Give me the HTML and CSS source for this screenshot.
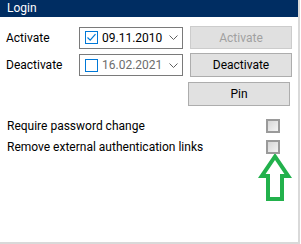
FILE: index.html
```html
<!DOCTYPE html>
<html>
<head>
<meta charset="utf-8">
<link rel="stylesheet" href="styles.css">
</head>
<body>
<div class="panel">
  <div class="header">Login</div>
  <div class="form">
    <div class="row">
      <span class="label">Activate</span>
      <div class="datebox">
        <span class="cb cb-checked"><svg width="11" height="11" viewBox="0 0 11 11"><path d="M1.5 5.5 L4.2 8.2 L9.5 2.2" fill="none" stroke="#0078d7" stroke-width="1.2"/></svg></span>
        <span class="date">09.11.2010</span>
        <svg class="chev" width="9" height="5" viewBox="0 0 9 5"><path d="M0.5 0.5 L4.5 4.5 L8.5 0.5" fill="none" stroke="#606060" stroke-width="1"/></svg>
      </div>
      <button class="btn btn-disabled">Activate</button>
    </div>
    <div class="row row2">
      <span class="label">Deactivate</span>
      <div class="datebox">
        <span class="cb"></span>
        <span class="date date-disabled">16.02.2021</span>
        <svg class="chev" width="9" height="5" viewBox="0 0 9 5"><path d="M0.5 0.5 L4.5 4.5 L8.5 0.5" fill="none" stroke="#606060" stroke-width="1"/></svg>
      </div>
      <button class="btn">Deactivate</button>
    </div>
    <div class="row row3">
      <button class="btn btn-pin">Pin</button>
    </div>
    <div class="opts">
      <div class="opt"><span class="opt-label">Require password change</span><span class="box"></span></div>
      <div class="opt"><span class="opt-label">Remove external authentication links</span><span class="box"></span></div>
    </div>
  </div>
  <svg class="arrow" width="38" height="58" viewBox="0 0 38 58"><path fill-rule="evenodd" fill="#22b14c" d="M19 7 L36 32 L28 32 L28 55 L10 55 L10 32 L2 32 Z M19 14.1 L9.6 28 L14 28 L14 51 L24 51 L24 28 L28.4 28 Z"/></svg>
</div>
</body>
</html>
```
FILE: styles.css
```css
* { box-sizing: border-box; }
html, body { margin: 0; padding: 0; background: #fff; }
body { font-family: Roboto, "Noto Sans", sans-serif; font-size: 12px; color: #000; }
.panel {
  position: relative;
  width: 300px;
  height: 244px;
  border-right: 2px solid #d9d9d9;
  border-bottom: 2px solid #d9d9d9;
}
.header {
  height: 17px;
  background: #002d62;
  color: #fff;
  padding-left: 7px;
  line-height: 17px;
  font-size: 12px;
}
.form { padding-top: 9px; }
.row { display: flex; align-items: center; height: 23px; }
.row2 { margin-top: 4px; height: 24px; }
.row3 { margin-top: 5px; height: 24px; justify-content: flex-end; padding-right: 8px; }
.label { width: 79px; padding-left: 6px; }
.datebox {
  width: 104px;
  height: 22px;
  border: 1px solid #7a7a7a;
  display: flex;
  align-items: center;
  padding-left: 5px;
}
.cb {
  width: 13px; height: 13px;
  border: 1px solid #0078d7;
  display: flex; align-items: center; justify-content: center;
}
.date { margin-left: 4px; color: #000; }
.date-disabled { color: #6d6d6d; }
.chev { margin-left: auto; margin-right: 4px; }
.btn {
  font-family: inherit; font-size: 12px;
  margin-left: 7px;
  width: 102px; height: 100%;
  background: #e1e1e1;
  border: 1px solid #adadad;
  color: #000;
  padding: 0;
}
.btn-disabled { background: #e0e0e0; border-color: #cccccc; color: #a0a0a0; }
.opts { margin-top: 9px; }
.opt { display: flex; align-items: center; justify-content: space-between; height: 21px; padding-left: 7px; padding-right: 18px; }
.box {
  position: relative;
  z-index: 2;
  width: 14px; height: 14px;
  border: 2px solid #9a9a9a;
  background: linear-gradient(135deg, #d6d6d6, #f4f4f4);
}
.arrow { position: absolute; z-index: 1; left: 256px; top: 146px; }
```
